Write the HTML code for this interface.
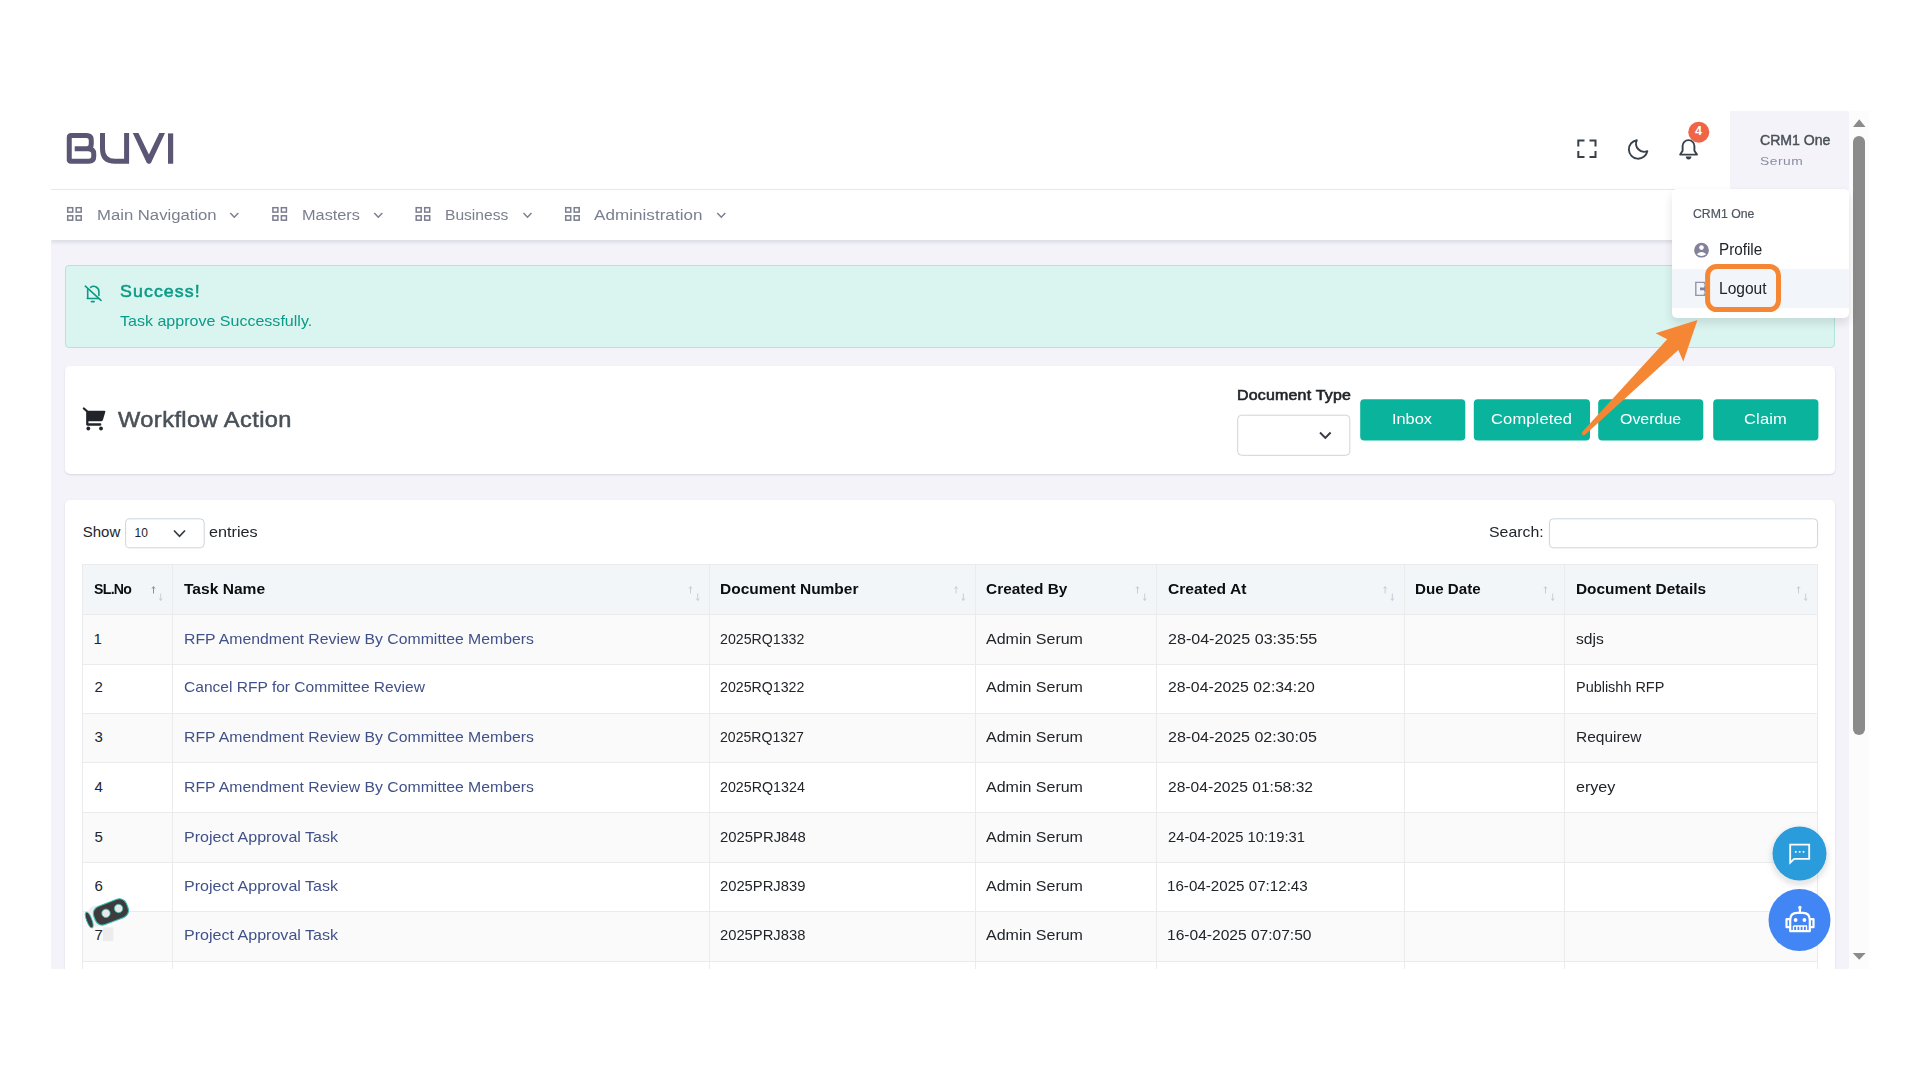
<!DOCTYPE html>
<html><head><meta charset="utf-8"><title>Workflow Action</title>
<style>
html,body{margin:0;padding:0;background:#fff;}
body{width:1920px;height:1080px;position:relative;overflow:hidden;font-family:"Liberation Sans",sans-serif;}
.a{position:absolute;box-sizing:border-box;}
.t{position:absolute;white-space:pre;line-height:0;transform-origin:0 0;font-family:"Liberation Sans",sans-serif;}
svg{position:absolute;overflow:visible;}
</style></head><body>
<!-- page bg -->
<div class="a" style="left:51px;top:111px;width:1798px;height:858px;background:#f3f3f9;"></div>
<!-- header -->
<div class="a" style="left:51px;top:111px;width:1679px;height:79px;background:#fff;border-bottom:1px solid #e9ebef;"></div>
<div class="a" style="left:1730px;top:111px;width:119px;height:78px;background:#f3f3f9;"></div>
<!-- nav -->
<div class="a" style="left:51px;top:190px;width:1798px;height:50px;background:#fff;box-shadow:0 2px 4px rgba(15,34,58,.12);"></div>
<!-- scrollbar -->
<div class="a" style="left:1849px;top:111px;width:20px;height:858px;background:#fcfcfc;"></div>
<div class="a" style="left:1853px;top:136px;width:12px;height:599px;background:#8b8b8b;border-radius:6px;"></div>
<svg width="1920" height="1080" style="left:0;top:0;"><path d="M1853 127 L1859.2 119.3 L1865.5 127Z" fill="#8b8b8b"/><path d="M1852.7 953 L1865.7 953 L1859.2 959.8Z" fill="#8b8b8b"/></svg>

<!-- alert -->
<div class="a" style="left:65px;top:265px;width:1770px;height:83px;background:#daf4f0;border:1px solid #aee5dc;border-radius:4px;"></div>
<!-- card 1 -->
<div class="a" style="left:65px;top:366px;width:1770px;height:108px;background:#fff;border-radius:5px;box-shadow:0 1px 2px rgba(56,65,74,.15);"></div>
<!-- card 2 -->
<div class="a" style="left:65px;top:500px;width:1770px;height:480px;background:#fff;border-radius:5px 5px 0 0;box-shadow:0 1px 2px rgba(56,65,74,.15);clip-path:inset(-5px -5px 11px -5px);"></div>

<!-- form controls / buttons (svg for sub-pixel edges) -->
<svg width="1920" height="1080" style="left:0;top:0;" fill="none">
<rect x="1237.7" y="415.2" width="112.1" height="40.1" rx="4" fill="#fff" stroke="#ced4da" stroke-width="1"/>
<g fill="#0ab39c">
<rect x="1360.2" y="399.2" width="105.1" height="41.3" rx="4"/>
<rect x="1473.8" y="399.2" width="116.2" height="41.3" rx="4"/>
<rect x="1598.2" y="399.2" width="105.1" height="41.3" rx="4"/>
<rect x="1713.2" y="399.2" width="105.2" height="41.3" rx="4"/>
</g>
<rect x="125.6" y="518.8" width="78.6" height="29" rx="4" fill="#fff" stroke="#ced4da" stroke-width="1"/>
<rect x="1549.4" y="518.8" width="268.2" height="29" rx="4" fill="#fff" stroke="#ced4da" stroke-width="1"/>
</svg>

<!-- table -->
<div id="tbl">
<div class="a" style="left:82.4px;top:564px;width:1735.0px;height:50.5px;background:#f3f6f9;"></div>
<div class="a" style="left:82.4px;top:614.5px;width:1735.0px;height:49.5px;background:#fafafa;"></div>
<div class="a" style="left:82.4px;top:713.5px;width:1735.0px;height:49.0px;background:#fafafa;"></div>
<div class="a" style="left:82.4px;top:812px;width:1735.0px;height:50px;background:#fafafa;"></div>
<div class="a" style="left:82.4px;top:911.5px;width:1735.0px;height:49.5px;background:#fafafa;"></div>
<div class="a" style="left:82.4px;top:563.5px;width:1736.0px;height:1.2px;background:#e9ebec;"></div>
<div class="a" style="left:82.4px;top:614.0px;width:1736.0px;height:1.2px;background:#e9ebec;"></div>
<div class="a" style="left:82.4px;top:663.5px;width:1736.0px;height:1.2px;background:#e9ebec;"></div>
<div class="a" style="left:82.4px;top:713.0px;width:1736.0px;height:1.2px;background:#e9ebec;"></div>
<div class="a" style="left:82.4px;top:762.0px;width:1736.0px;height:1.2px;background:#e9ebec;"></div>
<div class="a" style="left:82.4px;top:811.5px;width:1736.0px;height:1.2px;background:#e9ebec;"></div>
<div class="a" style="left:82.4px;top:861.5px;width:1736.0px;height:1.2px;background:#e9ebec;"></div>
<div class="a" style="left:82.4px;top:911.0px;width:1736.0px;height:1.2px;background:#e9ebec;"></div>
<div class="a" style="left:82.4px;top:960.5px;width:1736.0px;height:1.2px;background:#e9ebec;"></div>
<div class="a" style="left:81.9px;top:564px;width:1.2px;height:420px;background:#e9ebec;"></div>
<div class="a" style="left:171.9px;top:564px;width:1.2px;height:420px;background:#e9ebec;"></div>
<div class="a" style="left:708.9px;top:564px;width:1.2px;height:420px;background:#e9ebec;"></div>
<div class="a" style="left:974.5px;top:564px;width:1.2px;height:420px;background:#e9ebec;"></div>
<div class="a" style="left:1155.9px;top:564px;width:1.2px;height:420px;background:#e9ebec;"></div>
<div class="a" style="left:1403.5px;top:564px;width:1.2px;height:420px;background:#e9ebec;"></div>
<div class="a" style="left:1563.9px;top:564px;width:1.2px;height:420px;background:#e9ebec;"></div>
<div class="a" style="left:1816.9px;top:564px;width:1.2px;height:420px;background:#e9ebec;"></div>
</div>

<!-- dropdown -->
<div class="a" style="left:1672px;top:189px;width:177px;height:128.5px;background:#fff;border-radius:5px;box-shadow:0 5px 10px rgba(30,32,37,.12);"></div>
<div class="a" style="left:1672px;top:269.3px;width:177px;height:38.7px;background:#f2f5f9;"></div>

<!-- SVG overlay for icons -->
<svg width="1920" height="1080" style="left:0;top:0;" fill="none">
<!-- logo -->
<g stroke="#5b5674" stroke-width="5" stroke-linejoin="round" stroke-linecap="butt">
<path d="M74.7 148.75 H88 M69.25 161.25 V137.6 Q69.25 135.6 71.25 135.6 H86.5 Q91.25 135.6 91.25 140 V144 Q91.25 148.75 86.8 148.75 H88 Q93.75 148.75 93.75 154 V156.5 Q93.75 161.25 88.5 161.25 H71.25 Q69.25 161.25 69.25 159.25"/>
<path d="M102.5 133.1 V149 Q102.5 161.25 115 161.25 H126.6 M126.6 133.1 V163.75"/>
<path d="M132.8 133.1 H138.5 L148.9 154.6 L159.3 133.1 H165 L151.2 162.6 Q150.7 163.75 149.6 163.75 H148.2 Q147.1 163.75 146.6 162.6 Z" fill="#5b5674" stroke="none"/>
<path d="M170.6 133.4 V163.75" stroke-width="5.2"/>
</g>
<!-- nav grid icons + chevrons -->
<g stroke="#7b7e8f" stroke-width="1.5">
<rect x="67.7" y="207.7" width="5" height="4.4"/><rect x="76.2" y="207.7" width="5" height="4.4"/><rect x="67.7" y="215.8" width="5" height="4.4"/><rect x="76.2" y="215.8" width="5" height="4.4"/>
<rect x="272.9" y="207.7" width="5" height="4.4"/><rect x="281.4" y="207.7" width="5" height="4.4"/><rect x="272.9" y="215.8" width="5" height="4.4"/><rect x="281.4" y="215.8" width="5" height="4.4"/>
<rect x="416.2" y="207.7" width="5" height="4.4"/><rect x="424.7" y="207.7" width="5" height="4.4"/><rect x="416.2" y="215.8" width="5" height="4.4"/><rect x="424.7" y="215.8" width="5" height="4.4"/>
<rect x="565.7" y="207.7" width="5" height="4.4"/><rect x="574.2" y="207.7" width="5" height="4.4"/><rect x="565.7" y="215.8" width="5" height="4.4"/><rect x="574.2" y="215.8" width="5" height="4.4"/>
<path d="M230.3 213 L234.3 217.2 L238.3 213"/>
<path d="M374.3 213 L378.3 217.2 L382.3 213"/>
<path d="M523.5 213 L527.5 217.2 L531.5 213"/>
<path d="M717.3 213 L721.3 217.2 L725.3 213"/>
</g>
<!-- fullscreen -->
<g stroke="#38414a" stroke-width="2" >
<path d="M1578.3 146.5 V140.5 H1584.5 M1589.5 140.5 H1595.5 V146.5 M1595.5 151 V157 H1589.5 M1584.5 157 H1578.3 V151"/>
</g>
<!-- moon -->
<path d="M1636.8 140.2 A9.3 9.3 0 1 0 1647.3 151.2 A8.2 8.2 0 0 1 1636.8 140.2Z" stroke="#38414a" stroke-width="1.9" stroke-linejoin="round"/>
<!-- bell -->
<g stroke="#38414a" stroke-width="1.9" stroke-linejoin="round">
<path d="M1680.2 154.6 H1697 L1694.4 150.8 V146 A5.9 5.9 0 0 0 1682.6 146 V150.8 Z"/>
</g>
<path d="M1685.8 156.6 H1691.4 A2.8 2.8 0 0 1 1685.8 156.6Z" fill="#38414a"/>
<circle cx="1698.8" cy="132.2" r="10.5" fill="#f06548"/>
<!-- alert bell-off -->
<g stroke="#0a9a87" stroke-width="1.6" stroke-linejoin="round" stroke-linecap="round">
<path d="M87.3 298.5 H98.4 M87.7 298.4 V289.8 M98.9 295.4 V291.9 A5.3 5.3 0 0 0 90.6 287.3 M91.4 301.6 H94.2"/>
<path d="M85.3 286.2 L101 300.4"/>
</g>
<!-- cart -->
<g fill="#212529">
<path d="M87.6 410.7 H104.4 Q105.7 410.7 105.3 412 L102.9 420.1 Q102.6 421.2 101.5 421.2 H87.6 Z"/>
<path d="M83.9 408.5 L87.3 411.5 V424.5 H100.2" fill="none" stroke="#212529" stroke-width="2.3" stroke-linecap="round" stroke-linejoin="round"/>
<circle cx="88.3" cy="428.5" r="1.9"/><circle cx="101" cy="428.5" r="1.9"/>
</g>
<!-- select chevrons -->
<path d="M1320 432.5 L1325.3 437.8 L1330.6 432.5" stroke="#343a40" stroke-width="1.9"/>
<path d="M174 530.5 L179.5 536.3 L185 530.5" stroke="#343a40" stroke-width="1.7"/>
<!-- profile icon -->
<circle cx="1701.5" cy="250.2" r="7.4" fill="#82839a"/>
<circle cx="1701.5" cy="247.6" r="2.3" fill="#fff"/>
<path d="M1696.8 254.2 Q1701.5 249.8 1706.2 254.2 Q1701.5 257.6 1696.8 254.2Z" fill="#fff"/>
<!-- logout icon -->
<g stroke="#9495aa" stroke-width="1.4">
<path d="M1704.5 284.5 V282.4 H1695.8 V295.4 H1704.5 V293.3"/>
</g>
<path d="M1700 287.6 H1704.3 V285 L1708.6 288.9 L1704.3 292.8 V290.2 H1700Z" fill="#82839a"/>
<path d="M153.5 593.5 V586.8 M152.0 588.6 L153.5 586.6 L155.0 588.6" stroke="#8b919a" stroke-width="1"/>
<path d="M160.70000000000002 593.5 V600.3 M159.20000000000002 598.5 L160.70000000000002 600.5 L162.20000000000002 598.5" stroke="#c9ced4" stroke-width="1"/>
<path d="M690.5 593.5 V586.8 M689.0 588.6 L690.5 586.6 L692.0 588.6" stroke="#c9ced4" stroke-width="1"/>
<path d="M697.6999999999999 593.5 V600.3 M696.1999999999999 598.5 L697.6999999999999 600.5 L699.1999999999999 598.5" stroke="#c9ced4" stroke-width="1"/>
<path d="M956.1 593.5 V586.8 M954.6 588.6 L956.1 586.6 L957.6 588.6" stroke="#c9ced4" stroke-width="1"/>
<path d="M963.3 593.5 V600.3 M961.8 598.5 L963.3 600.5 L964.8 598.5" stroke="#c9ced4" stroke-width="1"/>
<path d="M1137.5 593.5 V586.8 M1136.0 588.6 L1137.5 586.6 L1139.0 588.6" stroke="#c9ced4" stroke-width="1"/>
<path d="M1144.7 593.5 V600.3 M1143.2 598.5 L1144.7 600.5 L1146.2 598.5" stroke="#c9ced4" stroke-width="1"/>
<path d="M1385.1 593.5 V586.8 M1383.6 588.6 L1385.1 586.6 L1386.6 588.6" stroke="#c9ced4" stroke-width="1"/>
<path d="M1392.3 593.5 V600.3 M1390.8 598.5 L1392.3 600.5 L1393.8 598.5" stroke="#c9ced4" stroke-width="1"/>
<path d="M1545.5 593.5 V586.8 M1544.0 588.6 L1545.5 586.6 L1547.0 588.6" stroke="#c9ced4" stroke-width="1"/>
<path d="M1552.7 593.5 V600.3 M1551.2 598.5 L1552.7 600.5 L1554.2 598.5" stroke="#c9ced4" stroke-width="1"/>
<path d="M1798.5 593.5 V586.8 M1797.0 588.6 L1798.5 586.6 L1800.0 588.6" stroke="#c9ced4" stroke-width="1"/>
<path d="M1805.7 593.5 V600.3 M1804.2 598.5 L1805.7 600.5 L1807.2 598.5" stroke="#c9ced4" stroke-width="1"/>
</svg>

<span class="t" style="left:1760.10px;top:140.00px;font-size:14.5px;color:#495057;transform:scaleX(0.9712);-webkit-text-stroke:0.45px #495057;">CRM1 One</span>
<span class="t" style="left:1760.10px;top:161.00px;font-size:11.5px;color:#8a8ca3;letter-spacing:0.458px;transform:scaleX(1.2000);">Serum</span>
<span class="t" style="left:1693.00px;top:214.00px;font-size:12.5px;color:#4f5560;transform:scaleX(0.9810);-webkit-text-stroke:0.2px #4f5560;">CRM1 One</span>
<span class="t" style="left:1719.20px;top:250.00px;font-size:15.6px;color:#212529;transform:scaleX(0.9773);">Profile</span>
<span class="t" style="left:1719.20px;top:289.00px;font-size:15.6px;color:#212529;transform:scaleX(0.9979);">Logout</span>
<span class="t" style="left:96.50px;top:215.00px;font-size:15.5px;color:#7b7e8f;transform:scaleX(1.0766);">Main Navigation</span>
<span class="t" style="left:301.60px;top:215.00px;font-size:15.5px;color:#7b7e8f;transform:scaleX(1.0509);">Masters</span>
<span class="t" style="left:445.40px;top:215.00px;font-size:15.5px;color:#7b7e8f;transform:scaleX(1.0056);">Business</span>
<span class="t" style="left:594.00px;top:215.00px;font-size:15.5px;color:#7b7e8f;letter-spacing:0.031px;transform:scaleX(1.1000);">Administration</span>
<span class="t" style="left:119.80px;top:291.00px;font-size:16.2px;color:#0a9a87;letter-spacing:0.968px;transform:scaleX(1.1000);-webkit-text-stroke:0.5px #0a9a87;">Success!</span>
<span class="t" style="left:119.80px;top:321.00px;font-size:15px;color:#0a9a87;transform:scaleX(1.0687);">Task approve Successfully.</span>
<span class="t" style="left:118.10px;top:420.00px;font-size:21.5px;color:#495057;letter-spacing:0.370px;transform:scaleX(1.1000);-webkit-text-stroke:0.5px #495057;">Workflow Action</span>
<span class="t" style="left:1236.70px;top:395.00px;font-size:14.5px;color:#212529;letter-spacing:0.182px;transform:scaleX(1.1000);-webkit-text-stroke:0.6px #212529;">Document Type</span>
<span class="t" style="left:1392.21px;top:419.00px;font-size:15px;color:#ffffff;transform:scaleX(1.0889);">Inbox</span>
<span class="t" style="left:1491.10px;top:419.00px;font-size:15px;color:#ffffff;letter-spacing:0.136px;transform:scaleX(1.1000);">Completed</span>
<span class="t" style="left:1620.40px;top:419.00px;font-size:15px;color:#ffffff;transform:scaleX(1.0621);">Overdue</span>
<span class="t" style="left:1744.40px;top:419.00px;font-size:15px;color:#ffffff;letter-spacing:0.159px;transform:scaleX(1.1000);">Claim</span>
<span class="t" style="left:82.75px;top:532.00px;font-size:15px;color:#212529;">Show</span>
<span class="t" style="left:134.60px;top:533.00px;font-size:12px;color:#212529;">10</span>
<span class="t" style="left:208.80px;top:532.00px;font-size:15px;color:#212529;transform:scaleX(1.0800);">entries</span>
<span class="t" style="left:1488.60px;top:532.00px;font-size:15px;color:#212529;transform:scaleX(1.0569);">Search:</span>
<span class="t" style="left:94.40px;top:589.00px;font-size:15px;color:#0c0d0e;letter-spacing:-0.734px;transform:scaleX(0.9400);font-weight:700;">SL.No</span>
<span class="t" style="left:184.00px;top:589.00px;font-size:15px;color:#0c0d0e;transform:scaleX(1.0385);font-weight:700;">Task Name</span>
<span class="t" style="left:720.40px;top:589.00px;font-size:15px;color:#0c0d0e;transform:scaleX(1.0319);font-weight:700;">Document Number</span>
<span class="t" style="left:986.00px;top:589.00px;font-size:15px;color:#0c0d0e;transform:scaleX(1.0278);font-weight:700;">Created By</span>
<span class="t" style="left:1167.70px;top:589.00px;font-size:15px;color:#0c0d0e;transform:scaleX(1.0408);font-weight:700;">Created At</span>
<span class="t" style="left:1415.00px;top:589.00px;font-size:15px;color:#0c0d0e;transform:scaleX(1.0092);font-weight:700;">Due Date</span>
<span class="t" style="left:1575.50px;top:589.00px;font-size:15px;color:#0c0d0e;transform:scaleX(1.0260);font-weight:700;">Document Details</span>
<span class="t" style="left:93.60px;top:639.00px;font-size:15px;color:#212529;">1</span>
<span class="t" style="left:183.90px;top:639.00px;font-size:15px;color:#405189;transform:scaleX(1.0530);">RFP Amendment Review By Committee Members</span>
<span class="t" style="left:720.40px;top:639.00px;font-size:15px;color:#212529;transform:scaleX(0.9449);">2025RQ1332</span>
<span class="t" style="left:986.00px;top:639.00px;font-size:15px;color:#212529;transform:scaleX(1.0670);">Admin Serum</span>
<span class="t" style="left:1167.70px;top:639.00px;font-size:15px;color:#212529;transform:scaleX(1.0719);">28-04-2025 03:35:55</span>
<span class="t" style="left:1575.50px;top:639.00px;font-size:15px;color:#212529;transform:scaleX(1.0444);">sdjs</span>
<span class="t" style="left:94.60px;top:687.00px;font-size:15px;color:#212529;">2</span>
<span class="t" style="left:183.90px;top:687.00px;font-size:15px;color:#405189;transform:scaleX(1.0369);">Cancel RFP for Committee Review</span>
<span class="t" style="left:720.40px;top:687.00px;font-size:15px;color:#212529;transform:scaleX(0.9449);">2025RQ1322</span>
<span class="t" style="left:986.00px;top:687.00px;font-size:15px;color:#212529;transform:scaleX(1.0670);">Admin Serum</span>
<span class="t" style="left:1167.70px;top:687.00px;font-size:15px;color:#212529;transform:scaleX(1.0543);">28-04-2025 02:34:20</span>
<span class="t" style="left:1575.50px;top:687.00px;font-size:15px;color:#212529;transform:scaleX(0.9630);">Publishh RFP</span>
<span class="t" style="left:94.60px;top:737.00px;font-size:15px;color:#212529;">3</span>
<span class="t" style="left:183.90px;top:737.00px;font-size:15px;color:#405189;transform:scaleX(1.0530);">RFP Amendment Review By Committee Members</span>
<span class="t" style="left:720.40px;top:737.00px;font-size:15px;color:#212529;letter-spacing:-0.007px;transform:scaleX(0.9400);">2025RQ1327</span>
<span class="t" style="left:986.00px;top:737.00px;font-size:15px;color:#212529;transform:scaleX(1.0670);">Admin Serum</span>
<span class="t" style="left:1167.70px;top:737.00px;font-size:15px;color:#212529;transform:scaleX(1.0683);">28-04-2025 02:30:05</span>
<span class="t" style="left:1575.50px;top:737.00px;font-size:15px;color:#212529;transform:scaleX(1.0328);">Requirew</span>
<span class="t" style="left:94.60px;top:787.00px;font-size:15px;color:#212529;">4</span>
<span class="t" style="left:183.90px;top:787.00px;font-size:15px;color:#405189;transform:scaleX(1.0530);">RFP Amendment Review By Committee Members</span>
<span class="t" style="left:720.40px;top:787.00px;font-size:15px;color:#212529;transform:scaleX(0.9506);">2025RQ1324</span>
<span class="t" style="left:986.00px;top:787.00px;font-size:15px;color:#212529;transform:scaleX(1.0670);">Admin Serum</span>
<span class="t" style="left:1167.70px;top:787.00px;font-size:15px;color:#212529;transform:scaleX(1.0410);">28-04-2025 01:58:32</span>
<span class="t" style="left:1575.50px;top:787.00px;font-size:15px;color:#212529;transform:scaleX(1.0730);">eryey</span>
<span class="t" style="left:94.60px;top:837.00px;font-size:15px;color:#212529;">5</span>
<span class="t" style="left:183.90px;top:837.00px;font-size:15px;color:#405189;transform:scaleX(1.0701);">Project Approval Task</span>
<span class="t" style="left:720.40px;top:837.00px;font-size:15px;color:#212529;transform:scaleX(0.9897);">2025PRJ848</span>
<span class="t" style="left:986.00px;top:837.00px;font-size:15px;color:#212529;transform:scaleX(1.0670);">Admin Serum</span>
<span class="t" style="left:1167.70px;top:837.00px;font-size:15px;color:#212529;transform:scaleX(0.9827);">24-04-2025 10:19:31</span>
<span class="t" style="left:94.60px;top:886.00px;font-size:15px;color:#212529;">6</span>
<span class="t" style="left:183.90px;top:886.00px;font-size:15px;color:#405189;transform:scaleX(1.0701);">Project Approval Task</span>
<span class="t" style="left:720.40px;top:886.00px;font-size:15px;color:#212529;transform:scaleX(0.9839);">2025PRJ839</span>
<span class="t" style="left:986.00px;top:886.00px;font-size:15px;color:#212529;transform:scaleX(1.0670);">Admin Serum</span>
<span class="t" style="left:1166.69px;top:886.00px;font-size:15px;color:#212529;transform:scaleX(1.0101);">16-04-2025 07:12:43</span>
<span class="t" style="left:94.60px;top:935.00px;font-size:15px;color:#212529;">7</span>
<span class="t" style="left:183.90px;top:935.00px;font-size:15px;color:#405189;transform:scaleX(1.0701);">Project Approval Task</span>
<span class="t" style="left:720.40px;top:935.00px;font-size:15px;color:#212529;transform:scaleX(0.9839);">2025PRJ838</span>
<span class="t" style="left:986.00px;top:935.00px;font-size:15px;color:#212529;transform:scaleX(1.0670);">Admin Serum</span>
<span class="t" style="left:1166.66px;top:935.00px;font-size:15px;color:#212529;transform:scaleX(1.0374);">16-04-2025 07:07:50</span>
<span class="t" style="left:1695.10px;top:131.00px;font-size:12.5px;color:#ffffff;font-weight:700;">4</span>

<!-- top overlay: orange annotation + floating -->
<svg width="1920" height="1080" style="left:0;top:0;" fill="none">
<!-- floating chat -->
<defs><filter id="sh" x="-30%" y="-30%" width="160%" height="160%"><feDropShadow dx="0" dy="3" stdDeviation="3.5" flood-color="#1e2025" flood-opacity="0.18"/></filter></defs>
<circle cx="1799.5" cy="853.5" r="27" fill="#299cdb" filter="url(#sh)"/>
<g stroke="#fff" stroke-width="1.8" stroke-linejoin="miter">
<path d="M1790.2 862.6 V844.7 H1809.2 V858.8 H1794.2 Z"/>
</g>
<g fill="#fff"><rect x="1794.9" y="851" width="1.7" height="1.7"/><rect x="1798.8" y="851" width="1.7" height="1.7"/><rect x="1802.7" y="851" width="1.7" height="1.7"/></g>
<!-- floating bot -->
<circle cx="1799.5" cy="920" r="31" fill="#4285f4"/>
<g stroke="#fff" stroke-width="2.2" stroke-linejoin="round">
<path d="M1799.9 912.8 V908.5"/>
<path d="M1790.2 931.2 V920 Q1790.2 912.8 1797 912.8 H1803 Q1809.8 912.8 1809.8 920 V931.2 Z"/>
<path d="M1790.2 919.2 H1786.5 V927.2 H1790.2 M1809.8 919.2 H1813.5 V927.2 H1809.8"/>
<path d="M1793.5 926 H1806.5 V931 M1793.5 926 V931 M1796.8 926 V931 M1800 926 V931 M1803.2 926 V931" stroke-width="1.4"/>
</g>
<circle cx="1799.9" cy="907.4" r="1.7" fill="#fff"/>
<circle cx="1795.6" cy="920" r="1.9" fill="#fff"/><circle cx="1804.4" cy="920" r="1.9" fill="#fff"/>
<!-- goggles robot -->
<rect x="103" y="927.4" width="10.3" height="13.7" fill="#ececec"/>
<ellipse cx="95.5" cy="916" rx="8.5" ry="10.5" fill="#efefef"/>
<g transform="rotate(-21 110.5 912)">
<rect x="93.4" y="902.4" width="35" height="19.4" rx="7.5" fill="#3d3b3c" stroke="#35bdb5" stroke-width="1.1"/>
<circle cx="105.8" cy="911.6" r="4.2" fill="#e9e9e9" stroke="#35bdb5" stroke-width="0.7"/><circle cx="119.3" cy="911.6" r="4.2" fill="#e9e9e9" stroke="#35bdb5" stroke-width="0.7"/>
</g>
<ellipse cx="89.2" cy="920" rx="2.6" ry="8.3" transform="rotate(-21 89.2 920)" fill="#3d3b3c" stroke="#35bdb5" stroke-width="0.9"/>
<!-- orange annotation -->
<rect x="1707.6" y="266.5" width="70.9" height="43.1" rx="9" stroke="#f58634" stroke-width="5"/>
<path d="M1697.5 320 L1655.6 333.3 L1667.2 339.2 L1582.4 431.8 A1.9 1.9 0 0 0 1585.3 434.6 L1678.3 350 L1683.3 361.4 Z" fill="#f58634"/>

</svg>
<!-- clip -->
<div class="a" style="left:0;top:0;width:51px;height:1080px;background:#fff;"></div>
<div class="a" style="left:1869px;top:0;width:51px;height:1080px;background:#fff;"></div>
<div class="a" style="left:0;top:0;width:1920px;height:111px;background:#fff;"></div>
<div class="a" style="left:0;top:969px;width:1920px;height:111px;background:#fff;"></div>
</body></html>
